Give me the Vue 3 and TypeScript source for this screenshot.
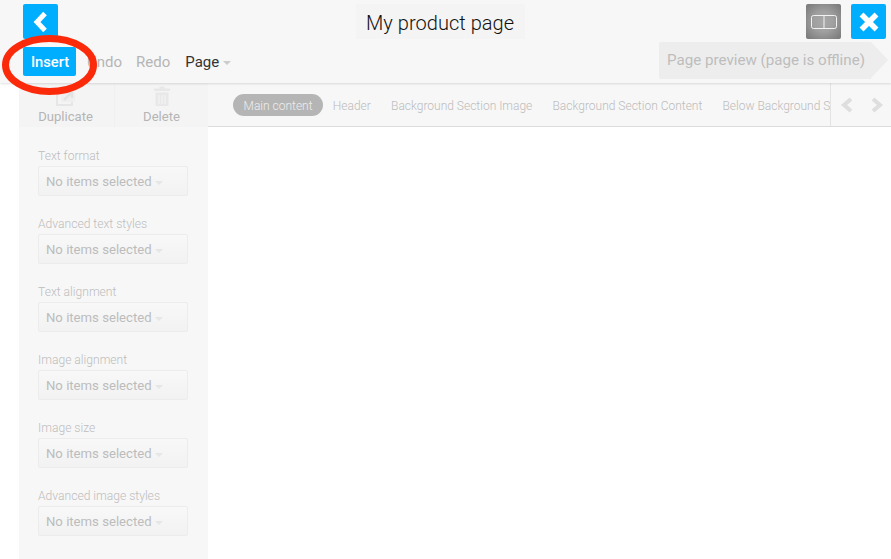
<script setup lang="ts">
const sections = [
  'Text format',
  'Advanced text styles',
  'Text alignment',
  'Image alignment',
  'Image size',
  'Advanced image styles'
]

const tabs = ['Header', 'Background Section Image', 'Background Section Content', 'Below Background Section']
</script>

<template>
  <div class="editor">
    <header class="topbar">
      <div class="row row-top">
        <button class="square blue" type="button" aria-label="Back">
          <svg width="18" height="22" viewBox="0 0 18 22"><path d="M13 2.5 L5 11 L13 19.5" fill="none" stroke="#fff" stroke-width="5" /></svg>
        </button>
        <h1 class="title">My product page</h1>
        <div class="top-actions">
          <button class="square grey" type="button" aria-label="Split view">
            <svg width="26" height="14" viewBox="0 0 26 14"><path d="M2.5.5h21a2 2 0 0 1 2 2v9a2 2 0 0 1-2 2h-21a2 2 0 0 1-2-2v-9a2 2 0 0 1 2-2zM13 .5v13" fill="none" stroke="#f2f2f2" /></svg>
          </button>
          <button class="square blue" type="button" aria-label="Close">
            <svg width="22" height="22" viewBox="0 0 22 22"><path d="M3.5 3.5 L18.5 18.5 M18.5 3.5 L3.5 18.5" fill="none" stroke="#fff" stroke-width="5.5" /></svg>
          </button>
        </div>
      </div>
      <div class="row row-bottom">
        <button class="insert" type="button">Insert</button>
        <span class="tool undo">Undo</span>
        <span class="tool redo">Redo</span>
        <span class="tool page">Page<i class="caret" /></span>
        <div class="preview">Page preview (page is offline)</div>
      </div>
    </header>

    <div class="body">
      <aside class="sidebar">
        <div class="side-actions">
          <div class="side-action side-action-first">
            <svg class="side-icon" width="20" height="20" viewBox="0 0 20 20">
              <path d="M1 5h15v14H1z" fill="none" stroke="#e6e6e6" stroke-width="2" />
              <path d="M5 3h14v13H5z" fill="#efefef" />
              <path d="M8 14l7-7M10 6h6v6" fill="none" stroke="#e2e2e2" stroke-width="2.4" />
            </svg>
            <span>Duplicate</span>
          </div>
          <div class="side-action">
            <svg class="side-icon" width="16" height="20" viewBox="0 0 16 20">
              <path d="M0 2.5h5.5V0.5h5v2H16v2.5H0zM1.5 6.5h13V20h-13z" fill="#e8e8e8" />
              <path d="M5 9v9M8 9v9M11 9v9" fill="none" stroke="#f4f4f4" stroke-width="1.2" />
            </svg>
            <span>Delete</span>
          </div>
        </div>
        <div class="fields">
          <div v-for="section in sections" :key="section" class="field">
            <label class="field-label">{{ section }}</label>
            <div class="select">No items selected<i class="caret caret-light" /></div>
          </div>
        </div>
      </aside>

      <main class="content">
        <nav class="tabs">
          <div class="tab-list">
            <span class="pill">Main content</span>
            <span v-for="tab in tabs" :key="tab" class="tab">{{ tab }}</span>
          </div>
          <div class="tab-arrows">
            <svg width="14" height="16" viewBox="0 0 14 16"><path d="M11 2 L4 8 L11 14" fill="none" stroke="#dedede" stroke-width="4" /></svg>
            <svg width="14" height="16" viewBox="0 0 14 16"><path d="M3 2 L10 8 L3 14" fill="none" stroke="#dedede" stroke-width="4" /></svg>
          </div>
        </nav>
      </main>
    </div>

    <svg class="marker" width="100" height="64" viewBox="0 0 100 64">
      <ellipse cx="49.5" cy="32" rx="44" ry="26.5" fill="none" stroke="#fb2a0a" stroke-width="7" />
    </svg>
  </div>
</template>

<style scoped>
.editor {
  position: relative;
  width: 891px;
  height: 559px;
  overflow: hidden;
  background: #fff;
  font-family: Roboto, 'Liberation Sans', sans-serif;
}

.topbar {
  position: relative;
  z-index: 1;
  box-sizing: border-box;
  height: 83px;
  padding: 4px 5px 0 23px;
  background: #f7f7f7;
  box-shadow: 0 1px 2px rgba(0, 0, 0, 0.12);
}

.row {
  display: flex;
  align-items: center;
}

.row-top {
  height: 35px;
}

.row-bottom {
  height: 37px;
  margin-top: 3px;
}

.square {
  display: flex;
  align-items: center;
  justify-content: center;
  width: 35px;
  height: 35px;
  padding: 0;
  border: none;
  border-radius: 2px;
}

.blue {
  background: #00aeff;
}

.grey {
  background: radial-gradient(circle, #a8a8a8 0%, #a0a0a0 40%, #777 100%);
}

.title {
  margin: 0 0 0 298px;
  box-sizing: border-box;
  width: 169px;
  padding-left: 10px;
  height: 35px;
  line-height: 38px;
  background: #f4f4f4;
  font-size: 20px;
  font-weight: 300;
  letter-spacing: 0.04px;
  color: #111;
}

.top-actions {
  display: flex;
  gap: 10px;
  margin-left: auto;
}

.insert {
  width: 53px;
  height: 29px;
  margin-top: 2px;
  padding: 0 0 0 1px;
  border: none;
  border-radius: 2px;
  background: #00aeff;
  color: #fff;
  font-family: inherit;
  font-size: 14.7px;
  font-weight: 500;
  line-height: 30px;
}

.tool {
  padding-top: 3px;
  font-size: 15px;
  color: #b5b5b5;
}

.undo {
  margin-left: 11px;
}

.redo {
  margin-left: 14px;
}

.page {
  margin-left: 15px;
  color: #333;
}

.caret {
  display: inline-block;
  margin-left: 4px;
  vertical-align: middle;
  border-top: 4px solid #ccc;
  border-left: 4px solid transparent;
  border-right: 4px solid transparent;
}

.caret-light {
  margin-left: 3px;
  border-top-color: #e6e6e6;
}

.preview {
  position: relative;
  box-sizing: border-box;
  width: 212px;
  height: 37px;
  line-height: 36px;
  margin-left: auto;
  margin-right: 15px;
  padding-left: 8px;
  border-radius: 2px 0 0 2px;
  background: #ededed;
  font-size: 15.15px;
  color: #bdbdbd;
}

.preview::after {
  content: '';
  position: absolute;
  left: 100%;
  top: 0;
  border-left: 17px solid #ededed;
  border-top: 18.5px solid transparent;
  border-bottom: 18.5px solid transparent;
}

.body {
  display: flex;
  height: 476px;
  padding-left: 19px;
}

.sidebar {
  flex: none;
  width: 189px;
  background: #f7f7f7;
}

.side-actions {
  display: flex;
  height: 44px;
  overflow: hidden;
  background: #f4f4f4;
}

.side-action {
  flex: 1;
  display: flex;
  flex-direction: column;
  align-items: center;
  justify-content: flex-end;
  padding-bottom: 3px;
  font-size: 13.1px;
  color: #b5b5b5;
}

.side-action-first {
  padding-right: 2px;
}

.side-action + .side-action {
  border-left: 1px solid #f0f0f0;
}

.side-icon {
  flex: none;
  margin-bottom: 3px;
}

.fields {
  display: flex;
  flex-direction: column;
  gap: 20px;
  padding: 21px 20px 0 19px;
}

.field-label {
  display: block;
  height: 18px;
  line-height: 16px;
  font-size: 12.1px;
  font-weight: 300;
  color: #bdbdbd;
}

.select {
  box-sizing: border-box;
  width: 150px;
  height: 30px;
  line-height: 30px;
  padding-left: 7px;
  border: 1px solid #ececec;
  border-radius: 2px;
  background: linear-gradient(#f8f8f8, #f2f2f2);
  font-size: 13.15px;
  color: #bcbcbc;
}

.content {
  flex: 1;
  min-width: 0;
}

.tabs {
  display: flex;
  height: 44px;
  box-sizing: border-box;
  background: #f7f7f7;
  border-bottom: 1px solid #dcdcdc;
}

.tab-list {
  flex: 1;
  min-width: 0;
  display: flex;
  align-items: center;
  gap: 20.2px;
  padding-left: 25px;
  overflow: hidden;
  white-space: nowrap;
  font-size: 12px;
  font-weight: 300;
  color: #bcbcbc;
}

.pill {
  flex: none;
  margin-right: -10.5px;
  padding: 0 10.5px;
  height: 22px;
  line-height: 24px;
  border-radius: 11px;
  background: #b5b5b5;
  color: #eee;
}

.tab {
  flex: none;
  padding-top: 2px;
}

.tab-arrows {
  flex: none;
  display: flex;
  align-items: center;
  gap: 16px;
  width: 61px;
  box-sizing: border-box;
  padding-left: 9px;
  border-left: 1px solid #e3e3e3;
}

.marker {
  position: absolute;
  z-index: 2;
  left: 0;
  top: 33px;
}
</style>
